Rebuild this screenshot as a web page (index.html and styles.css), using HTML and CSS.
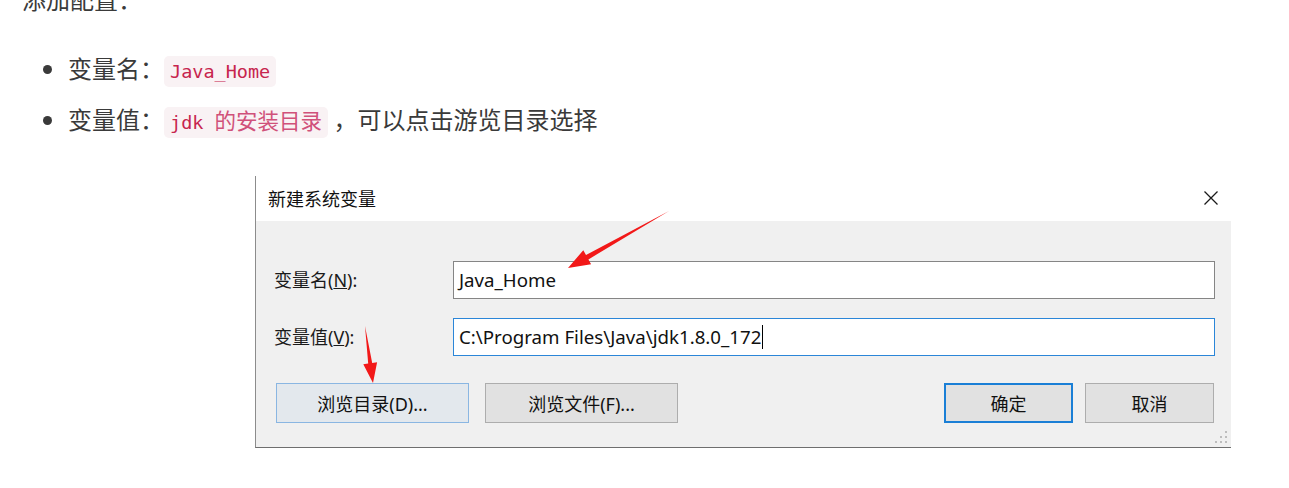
FILE: index.html
```html
<!DOCTYPE html>
<html lang="zh-CN">
<head>
<meta charset="utf-8">
<title>添加配置</title>
<link rel="stylesheet" href="styles.css">
</head>
<body>
<div class="article">
  <p class="intro">添加配置：</p>
  <ul class="list">
    <li>变量名：<code>Java_Home</code></li>
    <li>变量值：<code>jdk <span class="code-cjk">的安装目录</span></code> ，可以点击游览目录选择</li>
  </ul>
  <div class="figure">
    <div class="dialog">
      <div class="dlg-title">
        <span class="dlg-title-text">新建系统变量</span>
        <svg class="close" width="16" height="16" viewBox="0 0 16 16"><path d="M1.5 1.5 L14.5 14.5 M14.5 1.5 L1.5 14.5" stroke="#1a1a1a" stroke-width="1.3" fill="none"/></svg>
      </div>
      <div class="dlg-body">
        <div class="field">
          <span class="label">变量名(<u>N</u>):</span>
          <div class="input">Java_Home</div>
        </div>
        <div class="field">
          <span class="label">变量值(<u>V</u>):</span>
          <div class="input focus">C:\Program Files\Java\jdk1.8.0_172<span class="caret"></span></div>
        </div>
        <div class="buttons">
          <div class="left-btns">
            <button class="btn btn-wide btn-hover">浏览目录(D)...</button>
            <button class="btn btn-wide">浏览文件(F)...</button>
          </div>
          <div class="right-btns">
            <button class="btn btn-small btn-default">确定</button>
            <button class="btn btn-small">取消</button>
          </div>
        </div>
        <svg class="grip" width="14" height="14" viewBox="0 0 14 14">
          <rect x="10" y="0" width="2" height="2" fill="#bdbdbd"/>
          <rect x="10" y="5" width="2" height="2" fill="#bdbdbd"/>
          <rect x="10" y="10" width="2" height="2" fill="#bdbdbd"/>
          <rect x="5" y="5" width="2" height="2" fill="#bdbdbd"/>
          <rect x="5" y="10" width="2" height="2" fill="#bdbdbd"/>
          <rect x="0" y="10" width="2" height="2" fill="#bdbdbd"/>
        </svg>
      </div>
    </div>
  </div>
  <svg class="annot" width="1289" height="488" viewBox="0 0 1289 488">
    <polygon points="669,211 588.4,259.4 591.1,264.2 568,268 583.3,250.2 586,255" fill="#f21818"/>
    <polygon points="365,326 372.2,362.9 377.1,362.2 373,383 363.3,364.2 368.2,363.5" fill="#f21818"/>
  </svg>
</div>
</body>
</html>
```
FILE: styles.css
```css
html, body {
  margin: 0;
  padding: 0;
  background: #ffffff;
}

body {
  overflow: hidden;
}

.article {
  position: relative;
  display: flow-root;
  height: 488px;
  padding-left: 22px;
  font-family: "Noto Sans CJK SC", "Noto Sans", sans-serif;
  font-size: 24px;
  line-height: 39px;
  color: #3a3a3a;
}

.intro {
  margin: -21px 0 0;
}

.list {
  margin: 30px 0 0;
  padding-left: 46px;
  list-style: disc;
}

.list li {
  height: 39px;
  margin-bottom: 12px;
}

.list code {
  font-family: "DejaVu Sans Mono", "Liberation Mono", monospace;
  font-size: 18.5px;
  line-height: 1;
  color: #c7254e;
  background: #f9f2f4;
  border-radius: 5px;
  padding: 5px 6px;
}

.list .code-cjk {
  font-family: "Noto Sans CJK SC", sans-serif;
  font-size: 21.5px;
  line-height: 1;
  color: #d0517a;
}

.figure {
  margin-top: 38px;
  padding-left: 233px;
}

.dialog {
  position: relative;
  width: 975px;
  border-left: 1px solid #8c8c8c;
  border-bottom: 1px solid #6e6e6e;
  font-family: "Noto Sans", "Noto Sans CJK SC", sans-serif;
  font-size: 18px;
  line-height: 22px;
  color: #000;
}

.dlg-title {
  height: 45px;
  background: #fff;
  display: flex;
  align-items: center;
  justify-content: space-between;
  padding: 0 12px 0 12px;
}

.dlg-title-text {
  font-size: 18px;
  color: #111;
}

.close {
  display: block;
  margin-top: -2px;
}

.dlg-body {
  position: relative;
  height: 226px;
  box-sizing: border-box;
  background: #f0f0f0;
  padding: 40px 16px 0 18px;
}

.field {
  display: flex;
  align-items: center;
  margin-bottom: 19px;
}

.label {
  width: 179px;
  flex: none;
  color: #1a1a1a;
}

.input {
  flex: 1;
  height: 38px;
  box-sizing: border-box;
  border: 1px solid #858585;
  background: #fff;
  padding: 0 5px;
  display: flex;
  align-items: center;
  font-size: 18.7px;
  color: #111;
}

.input.focus {
  border-color: #2b86d8;
}

.caret {
  display: inline-block;
  width: 1px;
  height: 24px;
  background: #000;
  margin-left: 1px;
}

.buttons {
  display: flex;
  justify-content: space-between;
  margin-top: 27px;
  padding-left: 2px;
}

.left-btns,
.right-btns {
  display: flex;
}

.left-btns {
  gap: 16px;
}

.right-btns {
  gap: 12px;
  margin-right: 1px;
}

.btn {
  height: 40px;
  box-sizing: border-box;
  font-family: "Noto Sans", "Noto Sans CJK SC", sans-serif;
  font-size: 18px;
  color: #111;
  background: #e1e1e1;
  border: 1px solid #adadad;
  padding: 0;
  margin: 0;
}

.btn-wide {
  width: 193px;
}

.btn-small {
  width: 129px;
}

.btn-hover {
  background: #e3e8ed;
  border-color: #8ab6e2;
}

.btn-default {
  border: 2px solid #1a7fd6;
}

.grip {
  position: absolute;
  right: 2px;
  bottom: 2px;
}

.annot {
  position: absolute;
  left: 0;
  top: 0;
  pointer-events: none;
}
```
